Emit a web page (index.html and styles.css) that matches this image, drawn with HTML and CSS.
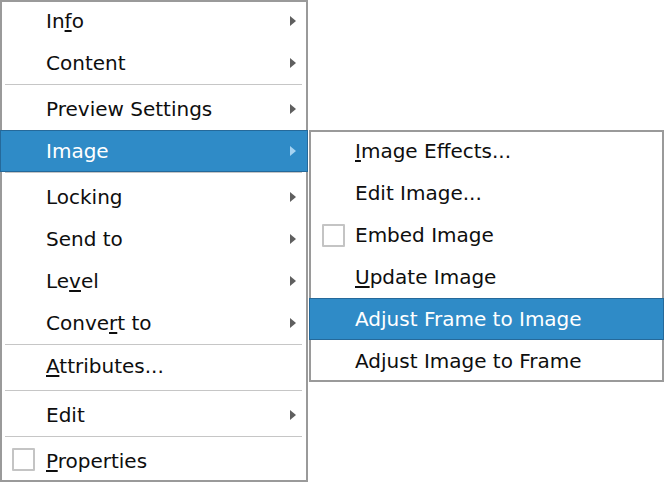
FILE: index.html
```html
<!DOCTYPE html>
<html>
<head>
<meta charset="utf-8">
<link rel="stylesheet" href="styles.css">
</head>
<body>
<div class="screen">
  <div class="menu main">
    <div class="rows">
      <div class="item"><span class="ico"></span><span class="label">In<u>f</u>o</span><svg class="arrow" viewBox="0 0 6 10"><path d="M0 0L6 5L0 10Z"/></svg></div>
      <div class="item"><span class="ico"></span><span class="label">Content</span><svg class="arrow" viewBox="0 0 6 10"><path d="M0 0L6 5L0 10Z"/></svg></div>
      <div class="sep"></div>
      <div class="item"><span class="ico"></span><span class="label">Preview Settings</span><svg class="arrow" viewBox="0 0 6 10"><path d="M0 0L6 5L0 10Z"/></svg></div>
      <div class="item hl"><span class="ico"></span><span class="label">Image</span><svg class="arrow" viewBox="0 0 6 10"><path d="M0 0L6 5L0 10Z"/></svg></div>
      <div class="sep"></div>
      <div class="item"><span class="ico"></span><span class="label">Locking</span><svg class="arrow" viewBox="0 0 6 10"><path d="M0 0L6 5L0 10Z"/></svg></div>
      <div class="item"><span class="ico"></span><span class="label">Send to</span><svg class="arrow" viewBox="0 0 6 10"><path d="M0 0L6 5L0 10Z"/></svg></div>
      <div class="item"><span class="ico"></span><span class="label">Le<u>v</u>el</span><svg class="arrow" viewBox="0 0 6 10"><path d="M0 0L6 5L0 10Z"/></svg></div>
      <div class="item"><span class="ico"></span><span class="label">Conve<u>r</u>t to</span><svg class="arrow" viewBox="0 0 6 10"><path d="M0 0L6 5L0 10Z"/></svg></div>
      <div class="sep tight"></div>
      <div class="item"><span class="ico"></span><span class="label"><u>A</u>ttributes...</span></div>
      <div class="sep loose"></div>
      <div class="item"><span class="ico"></span><span class="label">Edit</span><svg class="arrow" viewBox="0 0 6 10"><path d="M0 0L6 5L0 10Z"/></svg></div>
      <div class="sep"></div>
      <div class="item last"><span class="ico check"></span><span class="label"><u>P</u>roperties</span></div>
    </div>
  </div>
  <div class="menu sub">
    <div class="rows">
      <div class="item"><span class="ico"></span><span class="label"><u>I</u>mage Effects...</span></div>
      <div class="item"><span class="ico"></span><span class="label">Edit Image...</span></div>
      <div class="item"><span class="ico check"></span><span class="label">Embed Image</span></div>
      <div class="item"><span class="ico"></span><span class="label"><u>U</u>pdate Image</span></div>
      <div class="item hl"><span class="ico"></span><span class="label">Adjust Frame to Image</span></div>
      <div class="item last"><span class="ico"></span><span class="label">Adjust Image to Frame</span></div>
    </div>
  </div>
</div>
</body>
</html>
```
FILE: styles.css
```css
html, body {
  margin: 0;
  background: #ffffff;
}
body {
  font-family: "DejaVu Sans", "Noto Sans", sans-serif;
  font-size: 20px;
  color: #0e0e0e;
}
.screen {
  display: flex;
  align-items: flex-start;
}
.menu {
  box-sizing: border-box;
  border: 2px solid #9a9a9a;
  background: #ffffff;
}
.main {
  width: 308px;
  height: 482px;
}
.sub {
  width: 355px;
  height: 252px;
  margin-top: 130px;
  margin-left: 1px;
}
.rows {
  display: flex;
  flex-direction: column;
  margin-top: -2px;
}
.item {
  box-sizing: border-box;
  display: flex;
  height: 42px;
  line-height: 42px;
  padding: 0 10px 0 10px;
  white-space: nowrap;
}
.item.last {
  height: 40px;
  line-height: 42px;
}
.ico {
  box-sizing: border-box;
  flex: none;
  width: 23px;
  height: 23px;
  margin-right: 11px;
  align-self: center;
}
.ico.check {
  border: 2px solid #c4c4c4;
  border-radius: 1px;
  background: #ffffff;
}
.item.last .ico {
  margin-top: -1px;
}
.label u {
  text-decoration-thickness: 2px;
  text-underline-offset: 2px;
}
.arrow {
  flex: none;
  width: 6px;
  height: 10px;
  margin-left: auto;
  align-self: center;
  fill: #5f5f5f;
}
.item.hl {
  margin: 0 -2px;
  border: 1px solid #25699a;
  background: #2f8bc7;
  color: #ffffff;
  line-height: 40px;
  padding: 0 11px 0 11px;
}
.item.hl .arrow {
  fill: #a6d3f2;
}
.sep {
  height: 1px;
  background: #c6c6c6;
  margin: 0 4px 3px 3px;
}
.sep.tight {
  margin-bottom: 0;
}
.sep.loose {
  margin-top: 3px;
}
.sub .item {
  padding-left: 11px;
}
.sub .item.hl {
  padding-left: 12px;
}
.sub .ico {
  margin-right: 10px;
}
```
